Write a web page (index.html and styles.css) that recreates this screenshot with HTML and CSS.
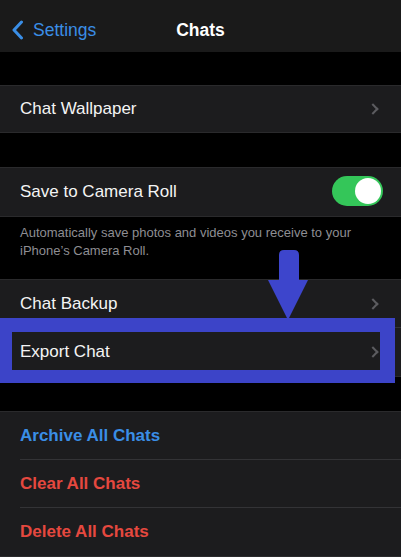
FILE: index.html
```html
<!DOCTYPE html>
<html>
<head>
<meta charset="utf-8">
<link rel="stylesheet" href="styles.css">
</head>
<body>
<div class="screen">
  <header class="nav">
    <div class="back">
      <svg class="back-icon" width="13" height="20" viewBox="0 0 13 20"><path d="M10.5 2 L3 10 L10.5 18" fill="none" stroke="#3a8ee6" stroke-width="3" stroke-linecap="round" stroke-linejoin="round"/></svg>
      <span>Settings</span>
    </div>
    <div class="title">Chats</div>
  </header>

  <section class="group g1">
    <div class="row"><span class="label">Chat Wallpaper</span><span class="chev"></span></div>
  </section>

  <section class="group g2">
    <div class="row"><span class="label">Save to Camera Roll</span><span class="toggle"><span class="knob"></span></span></div>
  </section>
  <p class="footer">Automatically save photos and videos you receive to your iPhone’s Camera Roll.</p>

  <section class="group g3">
    <div class="row sep"><span class="label">Chat Backup</span><span class="chev"></span></div>
    <div class="row"><span class="label">Export Chat</span><span class="chev"></span></div>
  </section>

  <section class="group g4">
    <div class="row sep"><span class="label action blue">Archive All Chats</span></div>
    <div class="row sep"><span class="label action red">Clear All Chats</span></div>
    <div class="row"><span class="label action red">Delete All Chats</span></div>
  </section>

  <div class="highlight"></div>
  <svg class="arrow" width="44" height="72" viewBox="0 0 44 72">
    <path d="M13 6 Q13 1 18 1 L28 1 Q33 1 33 6 L33 31 L42 31 L22 71 L2 31 L13 31 Z" fill="#3d45cc"/>
  </svg>
</div>
</body>
</html>
```
FILE: styles.css
```css
* { box-sizing: border-box; }
html, body { margin: 0; padding: 0; background: #000; }
body { font-family: "Liberation Sans", Arial, sans-serif; -webkit-font-smoothing: antialiased; }
.screen { position: relative; width: 401px; height: 557px; overflow: hidden; background: #000; }

.nav { height: 52px; padding-top: 9px; background: #1a1a1a; display: flex; align-items: center; justify-content: center; position: relative; }
.back { position: absolute; left: 11px; top: 9px; bottom: 0; display: flex; align-items: center; gap: 9px; color: #3a8ee6; font-size: 17.5px; }
.back-icon { display: block; margin-top: -1px; }
.title { color: #fff; font-size: 17.5px; font-weight: bold; margin-top: -1px; }

.group { background: #1c1c1e; border-top: 1px solid #2a2a2c; border-bottom: 1px solid #2a2a2c; }
.g1 { margin-top: 33px; }
.g2 { margin-top: 34px; }
.g4 { margin-top: 34px; }

.row { height: 48px; display: flex; align-items: center; justify-content: space-between; padding: 0 20px; position: relative; }
.g1 .row { height: 46px; }
.row.sep::after { content: ""; position: absolute; left: 20px; right: 0; bottom: 0; height: 1px; background: #333336; }

.label { color: #f4f4f4; font-size: 17px; }
.action { font-weight: bold; }
.blue { color: #3a8ee6; }
.red { color: #e5483f; }

.chev { width: 8px; height: 8px; border-right: 2px solid #5c5c60; border-top: 2px solid #5c5c60; transform: rotate(45deg); margin-right: 4px; }

.toggle { width: 51px; height: 30px; border-radius: 15px; background: #34c659; position: relative; margin-right: -2px; margin-top: -2px; }
.knob { position: absolute; right: 2px; top: 2px; width: 26px; height: 26px; border-radius: 50%; background: #fff; }

.footer { margin: 0; height: 62px; padding: 7px 20px 0; color: #8e8e93; font-size: 13px; line-height: 18px; }

.highlight { position: absolute; left: 0; top: 318px; width: 395px; height: 65px; border-style: solid; border-color: #3c44c8; border-width: 14px 15px 13px 12px; }
.arrow { position: absolute; left: 266px; top: 249px; }
```
